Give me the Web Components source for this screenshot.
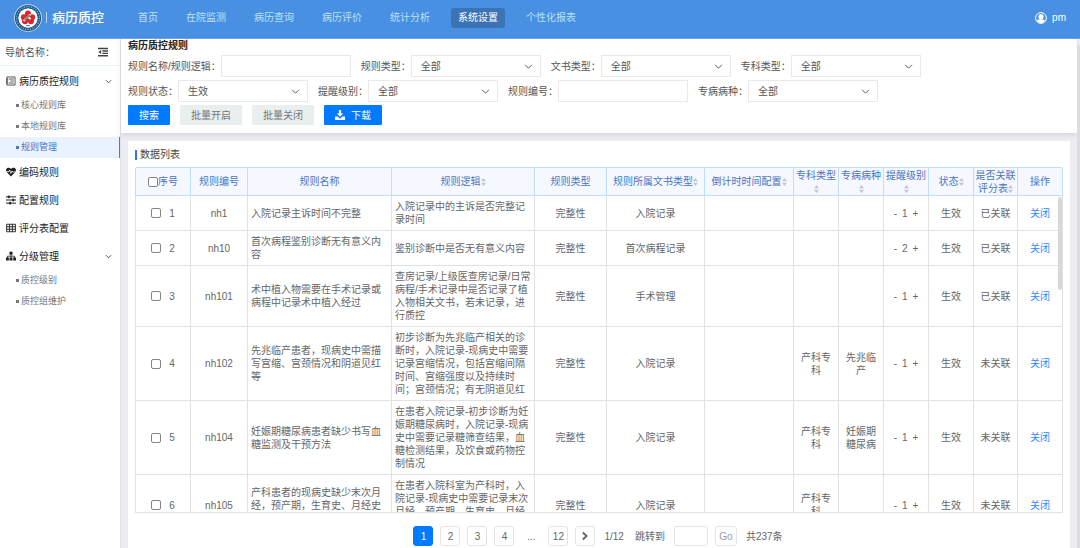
<!DOCTYPE html>
<html lang="zh-CN">
<head>
<meta charset="utf-8">
<meta name="viewport" content="width=device-width, initial-scale=1">
<title>病历质控</title>
<style>
    html, body
    {
        height: 100%;
        margin: 0;
    }

    body
    {
        font-family: "Liberation Sans", "Noto Sans CJK SC", sans-serif;
        font-size: 10px;
        line-height: 13px;
        color: #555;
        background: #ecedf3;

        --header: #4990e2;
        --primary: #007bff;
        --heading: #4c74c2;
        --line: #e2e2e2;
        --line-head: #bfddfd;
    }
</style>
</head>
<body>
<qc-app></qc-app>

<script>
class QcIcon extends HTMLElement
{
    static shapes =
    {
        outdent: '<path d="M0 1h16v2.400H0zM7 5.200h9v2.200H7zM7 9h9v2.200H7zM0 12.800h16v2.400H0zM5 4.700v6.600L.5 8z"/>',
        form: '<path d="M1.500 1.500h13v13h-13zM4.500 4.800h8M7 8h5.500M4.500 11.300h8M0 5h3.500M0 8h3.500M0 11h3.500" fill="none" stroke="currentColor" stroke-width="1.200"/>',
        heart: '<path d="M8 15 1.300 8.300C-.7 6.200-.2 3 2 1.700 4 .5 6.500 1 8 3c1.500-2 4-2.500 6-1.300 2.200 1.300 2.700 4.500.7 6.600z"/><path d="M0 7.500h4.500l1.300-2.700 2 5.400 1.800-3.700.8 1.500H16" fill="none" stroke="#fff" stroke-width="1.300"/>',
        sliders: '<path d="M0 3h16M0 8h16M0 13h16" stroke="currentColor" stroke-width="1.600"/><rect x="3" y="1" width="3" height="4"/><rect x="10" y="6" width="3" height="4"/><rect x="5" y="11" width="3" height="4"/>',
        table: '<path d="M1 2h14v12H1zM1 6h14M1 10h14M5.700 2v12M10.300 2v12" fill="none" stroke="currentColor" stroke-width="1.500"/>',
        sitemap: '<path d="M5.500 1h5v5h-5zM0 10.500h4.600V15H0zM5.700 10.500h4.600V15H5.700zM11.400 10.500H16V15h-4.600z"/><path d="M8 6v5M2.300 11V8.300h11.400V11" fill="none" stroke="currentColor" stroke-width="1.300"/>',
        down: '<path d="M2 5l6 6 6-6" fill="none" stroke="currentColor" stroke-width="1.700"/>',
        next: '<path d="M4.500 2.500 10.500 8l-6 5.500" fill="none" stroke="currentColor" stroke-width="3"/>',
        download: '<path d="M6.200 0h3.600v5.500h3.400L8 10.800 2.800 5.500h3.400z"/><path d="M0 10.500h4.200L8 14l3.800-3.500H16V16H0z"/>',
        user: '<circle cx="8" cy="8" r="7.200" fill="none" stroke="currentColor" stroke-width="1.300"/><ellipse cx="8" cy="6.200" rx="3.400" ry="3.700"/><path d="M2.300 12c1-1.700 2.700-2 4.200-2.400h3c1.500.4 3.200.7 4.200 2.400A7 7 0 0 1 8 14.900 7 7 0 0 1 2.300 12z"/>',
        sort: '<path d="M8 0l8 6.500H0zM8 16l8-6.500H0z"/>',
        logo: '<circle cx="8" cy="8" r="7.900" fill="#dfeaf3"/><circle cx="8" cy="8" r="6.500" fill="none" stroke="#1f5c8d" stroke-width="2"/><circle cx="8" cy="8" r="6.500" fill="none" stroke="#a9c5da" stroke-width=".6" stroke-dasharray=".6 .8"/><circle cx="8" cy="8" r="5.400" fill="#fff"/><g fill="#d9272e"><circle cx="8" cy="5.400" r="1.700"/><circle cx="5.600" cy="7.500" r="1.700"/><circle cx="10.400" cy="7.500" r="1.700"/><circle cx="6.300" cy="9.900" r="1.700"/><circle cx="9.700" cy="9.900" r="1.700"/><circle cx="8" cy="7.800" r="1.800"/></g><path d="M5.600 9.700c1-1.700 2.400-2.200 3.800-3.800M8.200 7.600l1.300 1" fill="none" stroke="#fff" stroke-width="1"/><path d="M6 9.200c.9-1.200 2-1.600 3-2.800" fill="none" stroke="#2d9150" stroke-width=".8"/><path d="M7 12.400h2" stroke="#1f5c8d" stroke-width=".5"/>'
    };

    constructor()
    {
        super();

        this.dom = this.attachShadow({mode: 'open'});
        this.dom.innerHTML = `
            <style>
                :host
                {
                    display: inline-block;
                    flex: none;
                    width: 10px;
                    height: 10px;
                }

                svg
                {
                    display: block;
                    width: 100%;
                    height: 100%;
                    fill: currentColor;
                }
            </style>
            <svg viewBox="0 0 16 16" preserveAspectRatio="none" aria-hidden="true">${QcIcon.shapes[this.getAttribute('name')]}</svg>
            `;
    }
}

class QcHeader extends HTMLElement
{
    constructor()
    {
        super();

        let items = ['首页', '在院监测', '病历查询', '病历评价', '统计分析', '系统设置', '个性化报表'];

        this.dom = this.attachShadow({mode: 'open'});
        this.dom.innerHTML = `
            <style>
                :host
                {
                    display: flex;
                    align-items: center;
                    box-sizing: border-box;
                    height: 39px;
                    padding: 0 14px 3px;
                    color: #fff;
                    background: var(--header);
                    border-bottom: 1px solid #6ea8ea;
                }

                .logo
                {
                    width: 28px;
                    height: 28px;
                }

                h1
                {
                    margin: 0 27px 0 4px;
                    padding-left: 5px;
                    border-left: 1px solid #b5d2f3;
                    font-size: 13px;
                    line-height: 11px;
                    font-weight: 500;
                }

                nav
                {
                    display: flex;
                    flex: 1;
                    gap: 14px;
                }

                nav a
                {
                    padding: 0 7px;
                    line-height: 20px;
                    border-radius: 3px;
                    color: #b9e2f5;
                    text-decoration: none;
                }

                nav a[aria-current]
                {
                    color: #fff;
                    background: #3b73b5;
                }

                .user
                {
                    display: flex;
                    align-items: center;
                    gap: 5px;
                }

                .user qc-icon
                {
                    width: 12px;
                    height: 12px;
                }
            </style>

            <qc-icon class="logo" name="logo"></qc-icon>
            <h1>病历质控</h1>
            <nav>
                ${items.map(item => `<a href="#" ${item == '系统设置' ? 'aria-current="page"' : ''}>${item}</a>`).join('')}
            </nav>
            <div class="user"><qc-icon name="user"></qc-icon><slot></slot></div>
            `;
    }
}

class QcMenuGroup extends HTMLElement
{
    constructor()
    {
        super();

        let items = this.hasAttribute('items') ? this.getAttribute('items').split(',') : [];
        let current = this.getAttribute('current');

        this.dom = this.attachShadow({mode: 'open'});
        this.dom.innerHTML = `
            <style>
                :host
                {
                    display: block;
                }

                a
                {
                    display: flex;
                    align-items: center;
                    color: #222;
                    text-decoration: none;
                }

                .top
                {
                    height: 28px;
                    padding: 0 8px 0 6px;
                    gap: 3px;
                }

                .top span
                {
                    flex: 1;
                }

                .top .down
                {
                    width: 7px;
                    height: 7px;
                }

                .sub
                {
                    box-sizing: border-box;
                    height: 21px;
                    padding-left: 16px;
                    gap: 2px;
                    font-size: 9px;
                    color: #777;
                }

                .sub::before
                {
                    content: "";
                    width: 3px;
                    height: 3px;
                    background: currentColor;
                }

                .sub[aria-current]
                {
                    color: var(--heading);
                    background: #eaf2ff;
                    border-right: 1px solid #3f7fd0;
                }
            </style>

            <a class="top" href="#">
                <qc-icon name="${this.getAttribute('icon')}"></qc-icon>
                <span><slot></slot></span>
                ${items.length ? '<qc-icon class="down" name="down"></qc-icon>' : ''}
            </a>
            ${items.map(item => `<a class="sub" href="#" ${item == current ? 'aria-current="page"' : ''}>${item}</a>`).join('')}
            `;
    }
}

class QcSidebar extends HTMLElement
{
    constructor()
    {
        super();

        this.dom = this.attachShadow({mode: 'open'});
        this.dom.innerHTML = `
            <style>
                :host
                {
                    display: block;
                    background: #fff;
                    border-right: 1px solid #e0e2e9;
                }

                header
                {
                    display: flex;
                    align-items: center;
                    justify-content: space-between;
                    height: 26px;
                    margin-bottom: 1px;
                    padding: 0 12px 0 5px;
                    border-bottom: 1px solid #e9f3fe;
                }

                button
                {
                    padding: 0;
                    border: 0;
                    background: none;
                    color: #444;
                    line-height: 0;
                }
            </style>

            <header>导航名称：<button aria-label="收起导航"><qc-icon name="outdent"></qc-icon></button></header>
            <nav>
                <qc-menu-group icon="form" items="核心规则库,本地规则库,规则管理" current="规则管理">病历质控规则</qc-menu-group>
                <qc-menu-group icon="heart">编码规则</qc-menu-group>
                <qc-menu-group icon="sliders">配置规则</qc-menu-group>
                <qc-menu-group icon="table">评分表配置</qc-menu-group>
                <qc-menu-group icon="sitemap" items="质控级别,质控组维护">分级管理</qc-menu-group>
            </nav>
            `;
    }
}

class QcField extends HTMLElement
{
    constructor()
    {
        super();

        let value = this.getAttribute('value');
        let control = value
            ? `<select id="control"><option>${value}</option></select><qc-icon name="down"></qc-icon>`
            : `<input id="control" type="text">`;

        this.dom = this.attachShadow({mode: 'open'});
        this.dom.innerHTML = `
            <style>
                :host
                {
                    display: flex;
                    align-items: center;
                }

                .box
                {
                    display: grid;
                    align-items: center;
                    width: 130px;
                }

                select, input, qc-icon
                {
                    grid-area: 1 / 1;
                }

                select, input
                {
                    box-sizing: border-box;
                    width: 100%;
                    height: 22px;
                    margin: 0;
                    padding: 0 9px;
                    appearance: none;
                    border: 1px solid #e9e9e9;
                    border-radius: 0;
                    background: #fff;
                    font: inherit;
                    color: inherit;
                }

                qc-icon
                {
                    justify-self: end;
                    width: 9px;
                    height: 9px;
                    margin-right: 8px;
                    pointer-events: none;
                }
            </style>

            <label for="control">${this.getAttribute('label')}：</label>
            <div class="box">${control}</div>
            `;
    }
}

class QcButton extends HTMLElement
{
    constructor()
    {
        super();

        this.dom = this.attachShadow({mode: 'open'});
        this.dom.innerHTML = `
            <style>
                :host
                {
                    display: block;
                }

                button
                {
                    display: flex;
                    align-items: center;
                    gap: 6px;
                    height: 20px;
                    padding: 0 11px;
                    border: 0;
                    border-radius: 1px;
                    background: #e9eeee;
                    font: inherit;
                    color: #777;
                }

                :host([primary]) button
                {
                    background: var(--primary);
                    color: #fff;
                }
            </style>
            <button><slot></slot></button>
            `;
    }
}

class QcToolbar extends HTMLElement
{
    constructor()
    {
        super();

        this.dom = this.attachShadow({mode: 'open'});
        this.dom.innerHTML = `
            <style>
                :host
                {
                    display: block;
                    padding: 0 7px 8px;
                    background: #fff;
                    box-shadow: 0 2px 5px rgba(0, 0, 0, 0.1);
                }

                h2
                {
                    margin: 0;
                    padding-bottom: 2px;
                    font-size: 10px;
                    line-height: 14px;
                    color: #222;
                }

                .fields
                {
                    display: flex;
                    flex-wrap: wrap;
                    gap: 3px 10px;
                }

                .buttons
                {
                    display: flex;
                    gap: 10px;
                    margin-top: 3px;
                }
            </style>

            <h2>病历质控规则</h2>
            <div class="fields">
                <qc-field label="规则名称/规则逻辑"></qc-field>
                <qc-field label="规则类型" value="全部"></qc-field>
                <qc-field label="文书类型" value="全部"></qc-field>
                <qc-field label="专科类型" value="全部"></qc-field>
                <qc-field label="规则状态" value="生效"></qc-field>
                <qc-field label="提醒级别" value="全部"></qc-field>
                <qc-field label="规则编号"></qc-field>
                <qc-field label="专病病种" value="全部"></qc-field>
            </div>
            <div class="buttons">
                <qc-button primary>搜索</qc-button>
                <qc-button>批量开启</qc-button>
                <qc-button>批量关闭</qc-button>
                <qc-button primary><qc-icon name="download"></qc-icon>下载</qc-button>
            </div>
            `;
    }
}

class QcTable extends HTMLElement
{
    // title, width, sortable
    static columns =
    [
        ['序号', 56],
        ['规则编号', 57],
        ['规则名称', 144],
        ['规则逻辑', 143, true],
        ['规则类型', 72],
        ['规则所属文书类型', 98, true],
        ['倒计时时间配置', 89, true],
        ['专科类型', 45, true],
        ['专病病种', 45, true],
        ['提醒级别', 45, true],
        ['状态', 45, true],
        ['是否关联评分表', 44, true],
        ['操作', 45]
    ];

    // code, name, logic, document, speciality, disease, level, linked
    static rows =
    [
        ['nh1', '入院记录主诉时间不完整', '入院记录中的主诉是否完整记录时间', '入院记录', '', '', 1, '已关联'],
        ['nh10', '首次病程鉴别诊断无有意义内容', '鉴别诊断中是否无有意义内容', '首次病程记录', '', '', 2, '已关联'],
        ['nh101', '术中植入物需要在手术记录或病程中记录术中植入经过', '查房记录/上级医查房记录/日常病程/手术记录中是否记录了植入物相关文书，若未记录，进行质控', '手术管理', '', '', 1, '已关联'],
        ['nh102', '先兆临产患者，现病史中需描写宫缩、宫颈情况和阴道见红等', '初步诊断为先兆临产相关的诊断时，入院记录-现病史中需要记录宫缩情况，包括宫缩间隔时间、宫缩强度以及持续时间；宫颈情况；有无阴道见红', '入院记录', '产科专科', '先兆临产', 1, '未关联'],
        ['nh104', '妊娠期糖尿病患者缺少书写血糖监测及干预方法', '在患者入院记录-初步诊断为妊娠期糖尿病时，入院记录-现病史中需要记录糖筛查结果，血糖检测结果，及饮食或药物控制情况', '入院记录', '产科专科', '妊娠期糖尿病', 1, '未关联'],
        ['nh105', '产科患者的现病史缺少末次月经，预产期，生育史、月经史的记录', '在患者入院科室为产科时，入院记录-现病史中需要记录末次月经、预产期、生育史、月经史等情况', '入院记录', '产科专科', '', 1, '未关联']
    ];

    constructor()
    {
        super();

        this.dom = this.attachShadow({mode: 'open'});
        this.dom.innerHTML = `
            <style>
                :host
                {
                    display: block;
                    position: relative;
                    overflow: hidden;
                    border-bottom: 1px solid var(--line);
                }

                .scroll
                {
                    height: 100%;
                    overflow-y: auto;
                    scrollbar-width: none;
                }

                .thumb
                {
                    position: absolute;
                    top: 30px;
                    right: 1px;
                    width: 4px;
                    height: 27%;
                    border-radius: 2px;
                    background: #d8d8d8;
                }

                table
                {
                    width: 100%;
                    table-layout: fixed;
                    border-collapse: separate;
                    border-spacing: 0;
                    color: #666;
                }

                th
                {
                    position: sticky;
                    top: 0;
                    height: 27px;
                    padding: 0 1px;
                    border: 0 solid var(--line-head);
                    border-width: 1px 1px 1px 0;
                    background: #f5f9ff;
                    color: var(--heading);
                    font-weight: normal;
                }

                th:first-child
                {
                    border-left-width: 1px;
                    border-top-left-radius: 2px;
                }

                th:last-child
                {
                    border-top-right-radius: 2px;
                }

                th qc-icon
                {
                    width: 5px;
                    height: 8px;
                    vertical-align: middle;
                    color: #c4c7cc;
                }

                td
                {
                    padding: 4px 3px;
                    border: 0 solid var(--line);
                    border-width: 0 1px 1px 0;
                    text-align: center;
                }

                td:first-child
                {
                    border-left-width: 1px;
                }

                td.text
                {
                    text-align: left;
                }

                label, .level
                {
                    display: flex;
                    align-items: center;
                    justify-content: center;
                }

                td label
                {
                    gap: 8px;
                }

                .level
                {
                    gap: 5px;
                }

                .level button
                {
                    padding: 0;
                    border: 0;
                    background: none;
                    font: inherit;
                    color: inherit;
                }

                input
                {
                    box-sizing: border-box;
                    width: 10px;
                    height: 10px;
                    margin: 0;
                    appearance: none;
                    border: 1px solid #858585;
                    border-radius: 2px;
                    background: #fff;
                }

                td a
                {
                    color: #2a8bff;
                    text-decoration: none;
                }
            </style>

            <div class="scroll">
                <table>
                    <colgroup>${QcTable.columns.map(column => `<col style="width: ${column[1]}px">`).join('')}</colgroup>
                    <thead><tr>${QcTable.columns.map(column => this.head(column)).join('')}</tr></thead>
                    <tbody>${QcTable.rows.map((row, index) => this.row(row, index)).join('')}</tbody>
                </table>
            </div>
            <div class="thumb"></div>
            `;
    }

    head([title, width, sortable])
    {
        if (title == '序号')
        {
            return `<th><label><input type="checkbox">${title}</label></th>`;
        }
        return `<th>${title}${sortable ? '<qc-icon name="sort"></qc-icon>' : ''}</th>`;
    }

    row([code, name, logic, doc, speciality, disease, level, linked], index)
    {
        return `
            <tr>
                <td><label><input type="checkbox">${index + 1}</label></td>
                <td>${code}</td>
                <td class="text">${name}</td>
                <td class="text">${logic}</td>
                <td>完整性</td>
                <td>${doc}</td>
                <td></td>
                <td>${speciality}</td>
                <td>${disease}</td>
                <td><div class="level"><button>-</button><span>${level}</span><button>+</button></div></td>
                <td>生效</td>
                <td>${linked}</td>
                <td><a href="#">关闭</a></td>
            </tr>`;
    }
}

class QcPager extends HTMLElement
{
    constructor()
    {
        super();

        this.dom = this.attachShadow({mode: 'open'});
        this.dom.innerHTML = `
            <style>
                :host
                {
                    display: flex;
                    align-items: center;
                    justify-content: center;
                    gap: 7px;
                    color: #666;
                }

                button, input
                {
                    box-sizing: border-box;
                    width: 20px;
                    height: 20px;
                    padding: 0;
                    border: 1px solid #e3e3e3;
                    border-radius: 3px;
                    background: #fff;
                    font: inherit;
                    color: inherit;
                }

                button[aria-current]
                {
                    border-color: var(--primary);
                    background: var(--primary);
                    color: #fff;
                }

                .gap
                {
                    width: 20px;
                    text-align: center;
                }

                .note
                {
                    margin: 0 2px;
                }

                button qc-icon
                {
                    display: block;
                    margin: 0 auto;
                }

                input
                {
                    width: 34px;
                }

                .go
                {
                    width: 22px;
                    color: #999;
                }
            </style>

            <button aria-current="page">1</button>
            <button>2</button>
            <button>3</button>
            <button>4</button>
            <span class="gap">...</span>
            <button>12</button>
            <button aria-label="下一页"><qc-icon name="next"></qc-icon></button>
            <span class="note">1/12</span>
            <label class="note" for="page">跳转到</label>
            <input id="page" type="text">
            <button class="go">Go</button>
            <span class="note">共237条</span>
            `;
    }
}

class QcPanel extends HTMLElement
{
    constructor()
    {
        super();

        this.dom = this.attachShadow({mode: 'open'});
        this.dom.innerHTML = `
            <style>
                :host
                {
                    display: flex;
                    flex-direction: column;
                    padding: 7px 7px 2px;
                    background: #fff;
                }

                h3
                {
                    display: flex;
                    align-items: center;
                    gap: 3px;
                    margin: 0 0 6px;
                    font-size: 10px;
                    font-weight: normal;
                    color: #444;
                }

                h3::before
                {
                    content: "";
                    width: 2px;
                    height: 10px;
                    background: #3370ff;
                }
            </style>
            <h3>${this.getAttribute('heading')}</h3>
            <slot></slot>
            `;
    }
}

class QcApp extends HTMLElement
{
    constructor()
    {
        super();

        this.dom = this.attachShadow({mode: 'open'});
        this.dom.innerHTML = `
            <style>
                :host
                {
                    display: grid;
                    grid-template: auto minmax(0, 1fr) / 121px minmax(0, 1fr) 3px;
                    height: 100vh;
                    overflow: hidden;
                }

                qc-header
                {
                    grid-column: 1 / -1;
                }

                main
                {
                    display: flex;
                    flex-direction: column;
                    gap: 8px;
                    min-height: 0;
                }

                qc-panel
                {
                    flex: 1;
                    min-height: 0;
                    margin: 0 7px;
                }

                qc-table
                {
                    flex: 1;
                    min-height: 0;
                }

                qc-pager
                {
                    margin-top: 13px;
                }

                .track
                {
                    margin-top: 7px;
                    background: #dcdcde;
                }
            </style>

            <qc-header>pm</qc-header>
            <qc-sidebar></qc-sidebar>
            <main>
                <qc-toolbar></qc-toolbar>
                <qc-panel heading="数据列表">
                    <qc-table></qc-table>
                    <qc-pager></qc-pager>
                </qc-panel>
            </main>
            <div class="track"></div>
            `;
    }
}

customElements.define("qc-icon", QcIcon);
customElements.define("qc-header", QcHeader);
customElements.define("qc-menu-group", QcMenuGroup);
customElements.define("qc-sidebar", QcSidebar);
customElements.define("qc-field", QcField);
customElements.define("qc-button", QcButton);
customElements.define("qc-toolbar", QcToolbar);
customElements.define("qc-table", QcTable);
customElements.define("qc-pager", QcPager);
customElements.define("qc-panel", QcPanel);
customElements.define("qc-app", QcApp);
</script>
</body>
</html>
